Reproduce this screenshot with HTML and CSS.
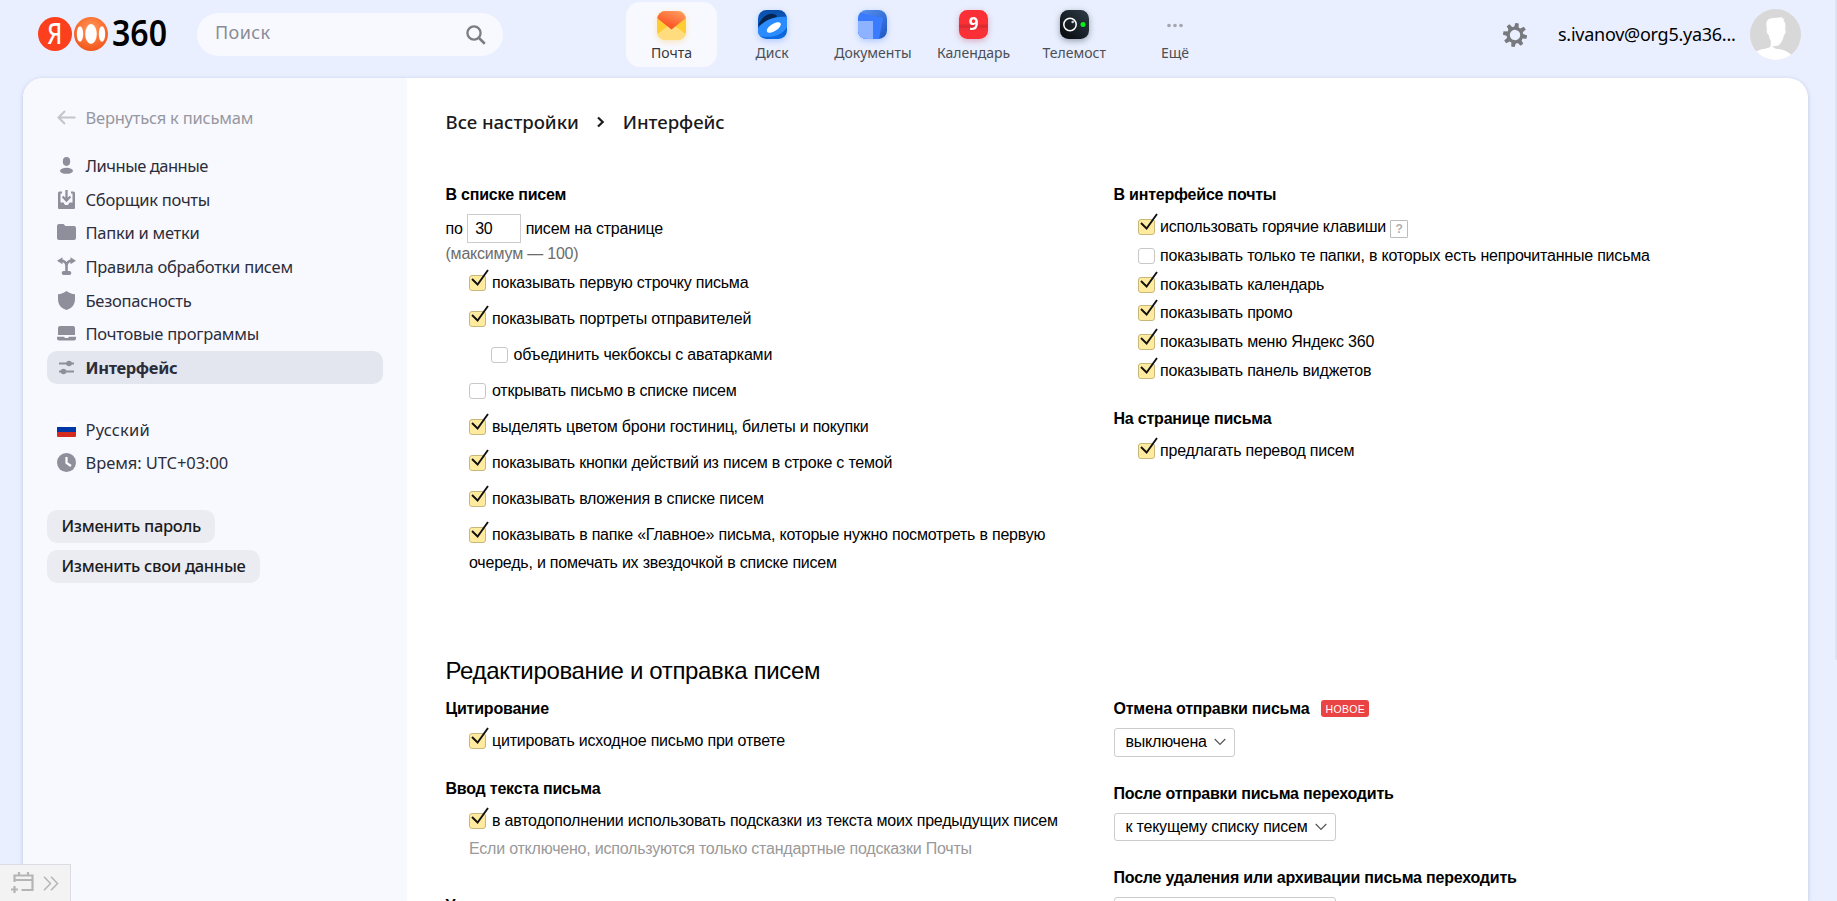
FILE: index.html
```
<!DOCTYPE html>
<html lang="ru">
<head>
<meta charset="utf-8">
<title>Интерфейс — Почта</title>
<link rel="stylesheet" href="styles.css">
</head>
<body>
<svg class="defs" width="0" height="0">
  <symbol id="tick" viewBox="0 0 20 18"><path d="M3 10l5.600 5.500L19 1" fill="none" stroke="#111" stroke-width="1.900"/></symbol>
  <symbol id="chev" viewBox="0 0 12 8"><path d="M.7 1l5.300 5.500L11.300 1" fill="none" stroke="#555" stroke-width="1.200"/></symbol>
</svg>
<header class="top">
  <svg class="logo" width="132" height="36" viewBox="0 0 132 36">
    <defs><radialGradient id="lo" cx=".5" cy=".35" r=".65"><stop offset="0" stop-color="#ff9a5c"/><stop offset=".6" stop-color="#fb6f32"/><stop offset="1" stop-color="#f0561c"/></radialGradient></defs>
    <circle cx="17" cy="18" r="17" fill="#fc3f1d"/>
    <text class="logo-ya" x="9.300" y="28.300" textLength="15" lengthAdjust="spacingAndGlyphs">Я</text>
    <circle cx="53" cy="18" r="17" fill="url(#lo)"/>
    <ellipse cx="53" cy="18" rx="5.800" ry="10" fill="#fff"/><ellipse cx="42" cy="18" rx="3.200" ry="7.700" fill="#fff"/><ellipse cx="64" cy="18" rx="3.200" ry="7.700" fill="#fff"/>
    <text class="logo-num" x="74" y="30.300" textLength="55" lengthAdjust="spacingAndGlyphs">360</text>
  </svg>
  <div class="search"><span>Поиск</span>
    <svg width="20" height="20" viewBox="0 0 20 20"><circle cx="8" cy="8" r="6.600" fill="none" stroke="#7d7d81" stroke-width="2.300"/><path d="M12.800 12.800l6 5.900" stroke="#7d7d81" stroke-width="2.600"/></svg>
  </div>
  <nav class="apps">
    <a class="app app-on"><svg class="ico" viewBox="0 0 29 29"><defs><linearGradient id="ma" x1="1" y1="0" x2=".4" y2="1"><stop offset="0" stop-color="#ffa466"/><stop offset="1" stop-color="#fb4a1c"/></linearGradient><clipPath id="rc"><rect width="29" height="29" rx="8.500"/></clipPath></defs><g clip-path="url(#rc)"><path fill="#ffcc33" d="M0 0h29v29H0z"/><path fill="#ffdd7e" d="M0 23.500L14.500 12 29 23.500V29H0z"/><path fill="url(#ma)" d="M0 0h29v7L14.500 18.500 0 7z"/></g></svg><span>Почта</span></a>
    <a class="app"><svg class="ico ico-b" viewBox="0 0 29 29"><defs><linearGradient id="di" x1="0" y1="0" x2="0" y2="1"><stop offset="0" stop-color="#0a4fa8"/><stop offset="1" stop-color="#0b6ce6"/></linearGradient></defs><g clip-path="url(#rc)"><path fill="url(#di)" d="M0 0h29v29H0z"/><path fill="#06264f" d="M0 16C4 5 14 1 19 6l-2 4z"/><path fill="#2b8cff" d="M-3 25C1 12 14 5 31 7v6C27 24 16 29 2 26z"/><ellipse cx="15.800" cy="17.500" rx="8" ry="3.600" transform="rotate(-32 15.800 17.500)" fill="#fff"/></g></svg><span>Диск</span></a>
    <a class="app"><svg class="ico ico-b" viewBox="0 0 29 29"><defs><linearGradient id="dc" x1="0" y1="0" x2="1" y2="1"><stop offset="0" stop-color="#5c93f0"/><stop offset="1" stop-color="#1d57c4"/></linearGradient></defs><g clip-path="url(#rc)"><path fill="url(#dc)" d="M0 0h29v29H0z"/><path fill="#3a7bff" d="M0 2l25 6-4 21H0z"/><path fill="#8db2ff" d="M0 11h15v18H0z"/></g></svg><span>Документы</span></a>
    <a class="app"><svg class="ico ico-r" viewBox="0 0 29 29"><g clip-path="url(#rc)"><path fill="#fb2f36" d="M0 0h29v29H0z"/><path fill="#df2a31" d="M0 14.500h29V18H0z"/><path fill="#f03238" d="M0 18h29v3H0z"/></g><text class="day" x="14.500" y="19.500" text-anchor="middle">9</text></svg><span>Календарь</span></a>
    <a class="app"><svg class="ico ico-k" viewBox="0 0 29 29"><defs><linearGradient id="te" x1="1" y1="0" x2="0" y2="1"><stop offset="0" stop-color="#2e3c47"/><stop offset="1" stop-color="#05080b"/></linearGradient></defs><g clip-path="url(#rc)"><path fill="url(#te)" d="M0 0h29v29H0z"/></g><circle cx="10" cy="14.500" r="6.200" fill="none" stroke="#fff" stroke-width="1.500"/><circle cx="12.700" cy="12" r="1.300" fill="#cfd4d8"/><circle cx="23" cy="14.500" r="2.500" fill="#08f01a"/></svg><span>Телемост</span></a>
    <a class="app"><svg class="ico ico-n" viewBox="0 0 29 29"><g fill="#a3a5b0"><circle cx="9" cy="15.500" r="1.800"/><circle cx="15" cy="15.500" r="1.800"/><circle cx="21" cy="15.500" r="1.800"/></g></svg><span>Ещё</span></a>
  </nav>
  <div class="user">
    <svg class="gear" width="24" height="24" viewBox="-12 -12 24 24"><g fill="#77797f" transform="rotate(10)"><circle r="6.800" fill="none" stroke="#77797f" stroke-width="3.200"/><path id="tt" d="M-2.300-7.500L-1.700-12h3.400l.6 4.500z"/><use href="#tt" transform="rotate(45)"/><use href="#tt" transform="rotate(90)"/><use href="#tt" transform="rotate(135)"/><use href="#tt" transform="rotate(180)"/><use href="#tt" transform="rotate(225)"/><use href="#tt" transform="rotate(270)"/><use href="#tt" transform="rotate(315)"/></g></svg>
    <span class="mail">s.ivanov@org5.ya36...</span>
    <svg class="ava" width="51" height="51" viewBox="0 0 51 51"><defs><clipPath id="av"><circle cx="25.500" cy="25.500" r="25.500"/></clipPath></defs><g clip-path="url(#av)"><path fill="#d8d8d8" d="M0 0h51v51H0z"/><path fill="#fff" d="M17 20c-1.200-5-.8-8.500 2-10C22 8.500 28 9.500 32.500 8l-.5 1.800 2.500-.2-1 2c2 2 2.300 5 1.500 8.500 1.300.8.500 5-1 6-.8 4-2.500 7.500-4.500 9.500-2 1.700-4.500 1.800-7 1.200.5 2 2.500 3 5.500 3.200 6 .3 10 3 13 5.500V55H5V43c4-2.500 10-3 13.500-4.200 1.700-.7 2.300-1.800 2.300-3.800v-3c-1-2-1.600-3.500-2-6-1.500-.5-2.800-4.500-1.800-6z"/></g></svg>
  </div>
</header>
<div class="card">
  <aside class="side">
    <a class="row back"><svg class="si" viewBox="0 0 19 19"><path d="M8 3L1.500 9.500 8 16M2 9.500h16.500" fill="none" stroke="#c3c4cc" stroke-width="2"/></svg><span>Вернуться к письмам</span></a>
    <nav class="menu">
      <a class="row person"><svg class="si" viewBox="0 0 19 19"><g fill="#8e8f9a"><ellipse cx="9.500" cy="5.500" rx="3.700" ry="4.400"/><ellipse cx="9.500" cy="14.800" rx="6.500" ry="3"/></g></svg><span>Личные данные</span></a>
      <a class="row"><svg class="si" viewBox="0 0 19 19"><path fill="#8e8f9a" d="M1 3q0-1.500 1.500-1.500H5v2H3.500v9h3l1.500 2.500h3l1.500-2.500h3v-9H14v-2h2.500Q18 1.500 18 3v15q0 1-1 1H2q-1 0-1-1z"/><path d="M9.500 0v10M5.600 6.500l3.900 4 3.900-4" fill="none" stroke="#8e8f9a" stroke-width="2.300"/></svg><span>Сборщик почты</span></a>
      <a class="row"><svg class="si" viewBox="0 0 19 19"><path fill="#8e8f9a" d="M0 3q0-2 2-2h4.500l2 2H17q2 0 2 2v10q0 2-2 2H2q-2 0-2-2z"/></svg><span>Папки и метки</span></a>
      <a class="row"><svg class="si" viewBox="0 0 19 19"><g fill="#8e8f9a"><path d="M0 3.800L5.500.3v7zM19 3.800L13.500.3v7z"/><rect x="4.700" y="14" width="9.600" height="4" rx="2"/></g><path d="M4 3.800c3 0 5.500 1.500 5.500 5M15 3.800c-3 0-5.500 1.500-5.500 5v7" fill="none" stroke="#8e8f9a" stroke-width="2.600"/></svg><span>Правила обработки писем</span></a>
      <a class="row"><svg class="si" viewBox="0 0 19 19"><path fill="#8e8f9a" d="M9.500 0C12 2 15 3 18 3.300V8c0 6-3.500 9.500-8.500 11C4.500 17.500 1 14 1 8V3.300C4 3 7 2 9.500 0z"/></svg><span>Безопасность</span></a>
      <a class="row"><svg class="si" viewBox="0 0 19 19"><path fill="#8e8f9a" d="M1 4q0-2 2-2h13q2 0 2 2v7H1zM0 12.800h7l1 1.200h3l1-1.200h7v1.700q0 2-2 2H2q-2 0-2-2z"/></svg><span>Почтовые программы</span></a>
      <a class="row on"><svg class="si" viewBox="0 0 19 19"><path d="M2 5.500h15M2 13.500h15" stroke="#8e8f9a" stroke-width="1.800"/><circle cx="12" cy="5.500" r="2.800" fill="#8e8f9a"/><circle cx="6.500" cy="13.500" r="2.800" fill="#8e8f9a"/></svg><span>Интерфейс</span></a>
    </nav>
    <div class="locale">
      <a class="row lang"><svg class="si" viewBox="0 0 19 19"><path fill="#fff" d="M0 2h19v5H0z"/><path fill="#0039a6" d="M0 7h19v5H0z"/><path fill="#d52b1e" d="M0 12h19v4q0 1-1 1H1q-1 0-1-1z"/></svg><span>Русский</span></a>
      <a class="row"><svg class="si" viewBox="0 0 19 19"><circle cx="9.500" cy="9.500" r="9.500" fill="#8e8f9a"/><path d="M9.500 4v6l4.500 3" fill="none" stroke="#fff" stroke-width="2.200"/></svg><span>Время: UTC+03:00</span></a>
    </div>
    <div class="btns"><a class="btn">Изменить пароль</a><a class="btn">Изменить свои данные</a></div>
  </aside>
  <main class="main">
    <div class="crumbs"><span>Все настройки</span><svg width="8" height="12" viewBox="0 0 8 12"><path d="M1 1.500L5.700 6 1 10.500" fill="none" stroke="#1a1a1a" stroke-width="2.200"/></svg><span>Интерфейс</span></div>
    <section class="cols cols-a">
      <div>
        <h3>В списке писем</h3>
        <div class="perpage"><span>по</span><span class="inp">30</span><span>писем на странице</span></div>
        <div class="max">(максимум — 100)</div>
        <div class="list">
          <label class="opt"><i class="cb on"><svg><use href="#tick"/></svg></i>показывать первую строчку письма</label>
          <label class="opt"><i class="cb on"><svg><use href="#tick"/></svg></i>показывать портреты отправителей</label>
          <label class="opt sub"><i class="cb"></i>объединить чекбоксы с аватарками</label>
          <label class="opt"><i class="cb"></i>открывать письмо в списке писем</label>
          <label class="opt"><i class="cb on"><svg><use href="#tick"/></svg></i>выделять цветом брони гостиниц, билеты и покупки</label>
          <label class="opt"><i class="cb on"><svg><use href="#tick"/></svg></i>показывать кнопки действий из писем в строке с темой</label>
          <label class="opt"><i class="cb on"><svg><use href="#tick"/></svg></i>показывать вложения в списке писем</label>
          <label class="opt"><i class="cb on"><svg><use href="#tick"/></svg></i>показывать в папке «Главное» письма, которые нужно посмотреть в первую очередь, и помечать их звездочкой в списке писем</label>
        </div>
      </div>
      <div>
        <h3>В интерфейсе почты</h3>
        <div class="list tight">
          <label class="opt"><i class="cb on"><svg><use href="#tick"/></svg></i>использовать горячие клавиши<b class="q">?</b></label>
          <label class="opt"><i class="cb"></i>показывать только те папки, в которых есть непрочитанные письма</label>
          <label class="opt"><i class="cb on"><svg><use href="#tick"/></svg></i>показывать календарь</label>
          <label class="opt"><i class="cb on"><svg><use href="#tick"/></svg></i>показывать промо</label>
          <label class="opt"><i class="cb on"><svg><use href="#tick"/></svg></i>показывать меню Яндекс 360</label>
          <label class="opt"><i class="cb on"><svg><use href="#tick"/></svg></i>показывать панель виджетов</label>
        </div>
        <h3 class="mt">На странице письма</h3>
        <div class="list tight">
          <label class="opt"><i class="cb on"><svg><use href="#tick"/></svg></i>предлагать перевод писем</label>
        </div>
      </div>
    </section>
    <h2>Редактирование и отправка писем</h2>
    <section class="cols">
      <div>
        <h3>Цитирование</h3>
        <div class="list single">
          <label class="opt"><i class="cb on"><svg><use href="#tick"/></svg></i>цитировать исходное письмо при ответе</label>
        </div>
        <h3 class="mt2">Ввод текста письма</h3>
        <div class="list single">
          <label class="opt"><i class="cb on"><svg><use href="#tick"/></svg></i>в автодополнении использовать подсказки из текста моих предыдущих писем</label>
          <p class="hint">Если отключено, используются только стандартные подсказки Почты</p>
        </div>
        <h3 class="mt3">Уведомления</h3>
      </div>
      <div>
        <h3>Отмена отправки письма<span class="badge">НОВОЕ</span></h3>
        <div class="sel">выключена<svg width="12" height="8"><use href="#chev"/></svg></div>
        <h3>После отправки письма переходить</h3>
        <div class="sel sel-w">к текущему списку писем<svg width="12" height="8"><use href="#chev"/></svg></div>
        <h3>После удаления или архивации письма переходить</h3>
        <div class="sel sel-w"></div>
      </div>
    </section>
  </main>
</div>
<div class="dock">
  <svg width="23" height="22" viewBox="0 0 23 22"><path d="M3.500 10V3.500h18v14.500h-11M3.500 8h18M8 0v4M17 0v4M0 17.500h7M3.500 14v7" fill="none" stroke="#b5b5b5" stroke-width="2.200"/></svg>
  <svg width="16" height="15" viewBox="0 0 16 15"><path d="M1 .7l6.500 6.800L1 14.300M8 .7l6.500 6.800L8 14.300" fill="none" stroke="#b5b5b5" stroke-width="1.500"/></svg>
</div>
<div class="scroll"></div>
</body>
</html>
```
FILE: styles.css
```
* { box-sizing: border-box; }
html, body { margin: 0; height: 901px; overflow: hidden; }
body { background: #e9effe; font: 16px "Liberation Sans", Arial, sans-serif; color: #000; display: flex; flex-direction: column; }
.defs { position: absolute; }

.top { height: 78px; flex: none; display: flex; align-items: flex-start; padding-left: 38px; font-family: "Noto Sans", sans-serif; }
.logo { margin-top: 16px; flex: none; overflow: visible; }
.logo-ya { font: 500 28px "Noto Sans", sans-serif; fill: #fff; }
.logo-num { font: 600 36px "Noto Sans", sans-serif; fill: #000; }
.search { width: 306px; height: 43px; margin: 13px 0 0 27px; border-radius: 22px; background: #f8f9ff; display: flex; align-items: center; justify-content: space-between; padding: 0 17px 0 18px; font-size: 18px; line-height: 24px; letter-spacing: .4px; color: #8a8c94; }
.search span { margin-top: -5px; }
.apps { display: flex; margin: 2px 0 0 123px; gap: 9.700px; }
.app { width: 91px; height: 65px; border-radius: 14px; display: flex; flex-direction: column; align-items: center; padding-top: 8px; font-size: 14px; line-height: 18px; color: #4c4e54; white-space: nowrap; }
.app-on { background: #f8f9ff; padding-top: 9px; color: #36373c; }
.ico { width: 29px; height: 29px; flex: none; margin-bottom: 5px; overflow: visible; filter: drop-shadow(0 2px 3px rgba(255,190,60,.35)); }
.app-on .ico { margin-bottom: 4px; }
.ico-b { filter: drop-shadow(0 2px 3px rgba(40,110,255,.3)); }
.ico-r { filter: drop-shadow(0 2px 3px rgba(190,50,90,.35)); }
.ico-k { filter: drop-shadow(0 2px 3px rgba(20,40,60,.4)); }
.ico-n { filter: none; }
.day { font: 700 17px "Noto Sans", sans-serif; fill: #fff; }
.user { margin-left: auto; padding-right: 36px; display: flex; align-items: center; height: 51px; margin-top: 9px; font-size: 18px; }
.mail { margin: -2px 15px 0 31px; width: 177px; white-space: nowrap; color: #000; letter-spacing: -.26px; }

.card { margin: 0 29px 0 23px; flex: 1; min-height: 0; border-radius: 20px 20px 0 0; background: #fff; display: flex; overflow: hidden; box-shadow: 0 1px 4px rgba(100,120,170,.35); }
.side { width: 384px; flex: none; background: #f8f9ff; padding: 23px 24px 0; font: 16.500px "Noto Sans", sans-serif; color: #2c2d3a; }
.row { display: flex; align-items: center; height: 33.600px; padding-left: 10px; gap: 9.500px; border-radius: 10px; white-space: nowrap; }
.si { width: 19px; height: 19px; flex: none; }
.back { color: #96979f; letter-spacing: -.22px; }
.menu { margin-top: 14.400px; letter-spacing: -.26px; }
.person { letter-spacing: -.48px; }
.row.on { background: #e3e6ee; font-weight: 700; letter-spacing: -.36px; }
.locale { margin-top: 28.400px; letter-spacing: -.06px; }
.lang { letter-spacing: .15px; }
.btns { margin-top: 30px; display: flex; flex-direction: column; align-items: flex-start; gap: 7px; letter-spacing: -.31px; }
.btn { height: 33px; line-height: 31px; border-radius: 10px; background: #ebecf1; padding: 0 14.500px; font-weight: 500; color: #1b1b1f; white-space: nowrap; }

.main { flex: 1; min-width: 0; padding-left: 38.500px; letter-spacing: -.21px; }
.crumbs { display: flex; align-items: center; gap: 18px; height: 26px; margin: 30px 0 51px; font: 500 18.600px "Noto Sans", sans-serif; letter-spacing: -.03px; color: #1a1a1a; }
.crumbs svg { margin: 2px 0 0; }
.cols { display: grid; grid-template-columns: 668px 1fr; }
.cols-a { height: 472px; }
h3 { margin: 0; font-size: 16px; line-height: 20px; font-weight: 700; white-space: nowrap; }
h2 { margin: 0 0 14px; font-size: 24px; line-height: 28px; font-weight: 400; letter-spacing: -.34px; }
.perpage { display: flex; align-items: center; height: 29px; margin-top: 9px; gap: 4.500px; }
.inp { width: 54px; height: 29px; border: 1px solid #ccc; padding-left: 7px; line-height: 27px; }
.max { line-height: 20px; margin: 1px 0; color: #6c6c6c; }
.list { padding-left: 23.500px; width: 624px; }
.opt { display: block; padding: 4px 0; line-height: 28px; }
.opt.sub { padding-left: 21.500px; }
.cb { display: inline-block; position: relative; width: 17px; height: 16px; margin-right: 6px; vertical-align: -3px; border: 1px solid #c8c8c8; border-radius: 3px; background: #fff; }
.cb.on { background: #ffeba0; border-color: #c9b77a; }
.cb svg { position: absolute; left: -1px; top: -7px; width: 20px; height: 18px; }
.tight { margin-top: 8px; padding-left: 24.500px; }
.tight .cb { margin-right: 5px; }
.tight .opt { padding: 0; line-height: 28.800px; }
.single { margin-top: 4px; }
.single .opt { padding-bottom: 0; white-space: nowrap; }
.q { display: inline-block; width: 18px; height: 18px; margin-left: 4px; border: 1.500px solid #bbb; border-radius: 1px; font-size: 12px; line-height: 16px; text-align: center; color: #b0b0b0; vertical-align: -1px; }
.mt { margin-top: 23.200px; }
.mt2 { margin-top: 24px; }
.mt3 { margin-top: 33px; }
.hint { margin: 0; line-height: 28px; color: #999; }
.badge { display: inline-block; margin-left: 12px; width: 48px; height: 17px; border-radius: 3px; background: #ea4343; color: #fff; font-size: 10.500px; font-weight: 400; line-height: 18px; letter-spacing: .4px; text-align: center; vertical-align: 1px; }
.sel { display: flex; align-items: center; justify-content: space-between; width: 121px; height: 29px; margin: 9px 0 27px; padding: 0 8px 1px 11px; border: 1px solid #ccc; border-radius: 3px; white-space: nowrap; }
.sel-w { width: 222px; height: 28px; padding-bottom: 0; }

.dock { position: absolute; left: -1px; top: 864px; width: 72px; height: 38px; background: #f3f3f3; border: 1px solid #dcdde2; display: flex; align-items: center; gap: 9px; padding-left: 11px; }
.scroll { position: absolute; right: 0; top: -4px; width: 2px; height: 664px; background: #dce3f1; border-radius: 2px; }
```
